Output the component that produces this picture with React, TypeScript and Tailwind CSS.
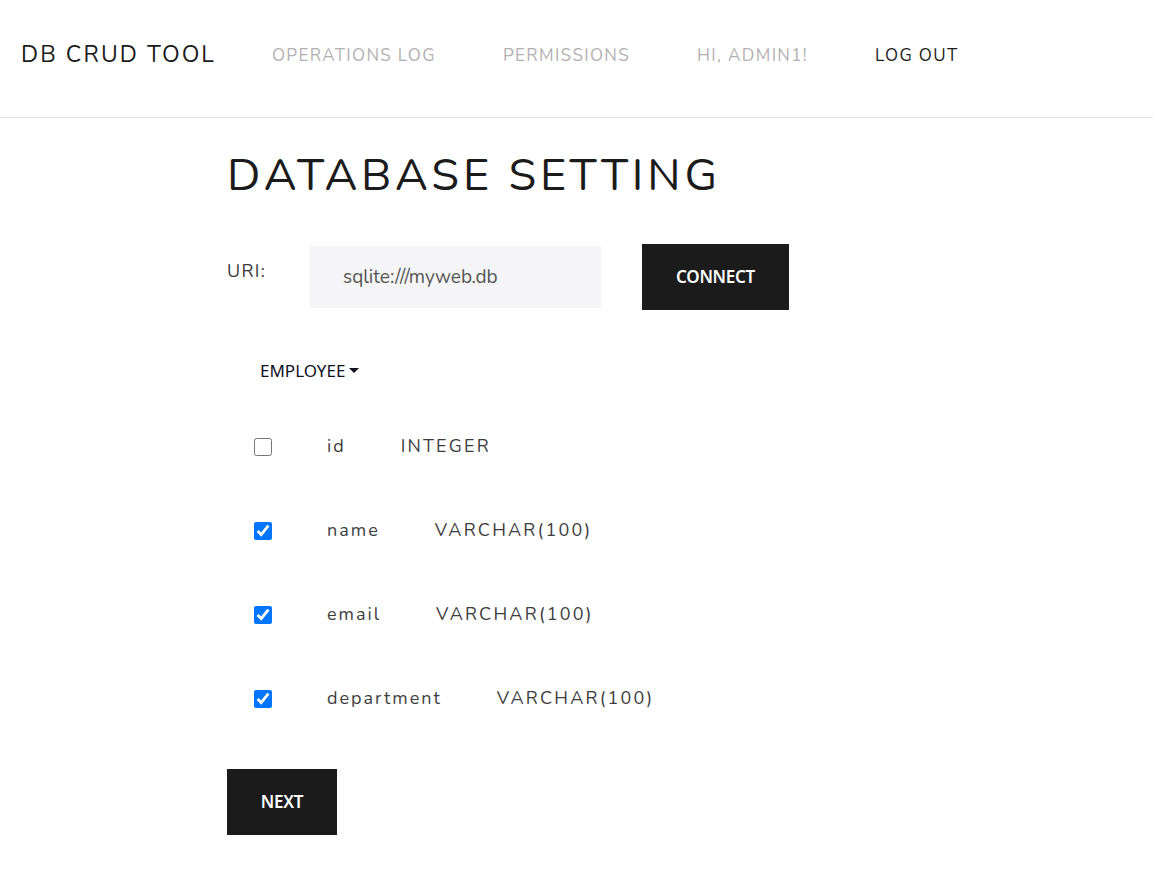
import React from 'react';

const columns = [
  { name: 'id', type: 'INTEGER', checked: false },
  { name: 'name', type: 'VARCHAR(100)', checked: true },
  { name: 'email', type: 'VARCHAR(100)', checked: true },
  { name: 'department', type: 'VARCHAR(100)', checked: true },
];

const navLinks = ['OPERATIONS LOG', 'PERMISSIONS', 'HI, ADMIN1!'];

const App = () => {
  return (
    <div className="min-h-screen bg-white font-['Nunito','Lato',sans-serif] text-[#1b1b1b]">
      {/* Navbar */}
      <header className="h-[118px] border-b border-[#e6e6e6] flex items-center">
        <div className="flex items-center pl-[21px] pb-[6px]">
          <span className="text-[23px] tracking-[2.1px] text-[#1b1b1b] mr-[56px]">DB CRUD TOOL</span>
          <nav className="flex items-center gap-[67px] text-[17px] tracking-[1.35px]">
            {navLinks.map((link) => (
              <a key={link} href="#" className="text-[#b3b0b2]">
                {link}
              </a>
            ))}
            <a href="#" className="text-[#1b1b1b]">LOG OUT</a>
          </nav>
        </div>
      </header>

      <main className="pl-[227px] pt-[31px]">
        <h1 className="text-[45px] leading-[1.2] tracking-[3.85px] text-[#1b1b1b]">DATABASE SETTING</h1>

        {/* URI form */}
        <div className="flex items-start mt-[41px]">
          <label className="text-[18px] tracking-[1.3px] text-[#3a3a3a] mt-[14px] w-[83px]">URI:</label>
          <div className="w-[291px] h-[62px] bg-[#f5f5f7] mt-[2px] flex items-center pl-[33px] text-[19px] text-[#555]">
            sqlite:///myweb.db
          </div>
          <button className="ml-[41px] w-[147px] h-[66px] bg-[#1b1b1b] text-white text-[17px] font-semibold font-['Noto_Sans',sans-serif] tracking-[-0.3px]">
            CONNECT
          </button>
        </div>

        {/* Table dropdown */}
        <div className="mt-[48px] pl-[33px] flex items-center text-[17px] text-[#10101e] font-['Noto_Sans',sans-serif]">
          EMPLOYEE
          <span className="ml-[4px] inline-block w-0 h-0 border-t-[5px] border-t-[#10101e] border-x-[5px] border-x-transparent"></span>
        </div>

        {/* Columns */}
        <div className="mt-[54px] pl-[27px] flex flex-col gap-[66px]">
          {columns.map((col) => (
            <div key={col.name} className="flex items-center h-[18px]">
              <input
                type="checkbox"
                defaultChecked={col.checked}
                className="w-[18px] h-[18px] m-0"
              />
              <span className="ml-[55px] text-[18px] tracking-[2px] text-[#3d3d3d]">{col.name}</span>
              <span className="ml-[55px] text-[18px] tracking-[2.2px] text-[#3d3d3d]">{col.type}</span>
            </div>
          ))}
        </div>

        <button className="mt-[61px] w-[110px] h-[66px] bg-[#1b1b1b] text-white text-[17px] font-semibold font-['Noto_Sans',sans-serif] tracking-[-0.3px]">
          NEXT
        </button>
      </main>
    </div>
  );
};

export default App;
